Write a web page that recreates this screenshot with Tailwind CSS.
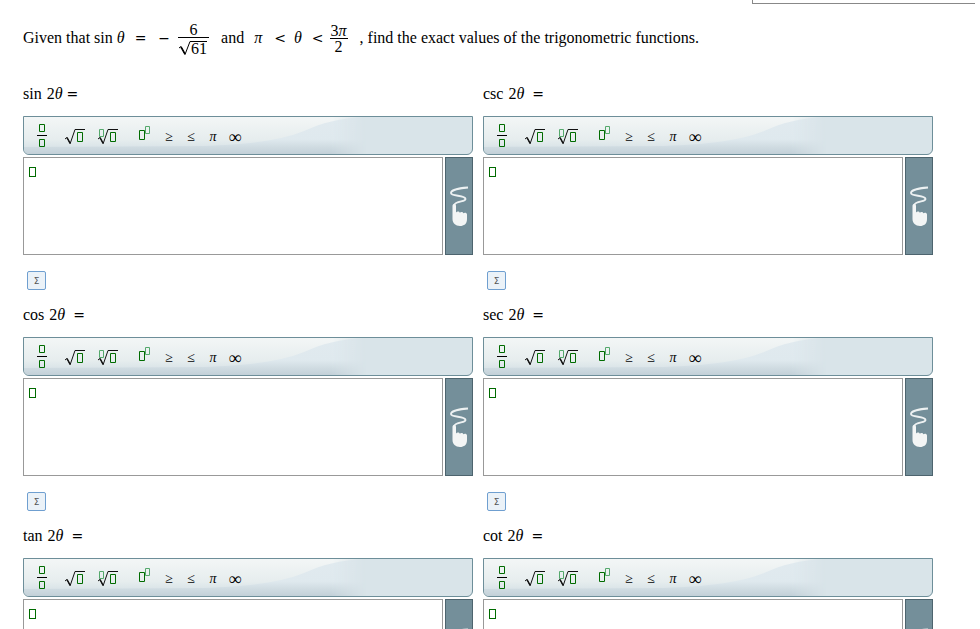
<!DOCTYPE html>
<html lang="en">
  <head>
    <meta charset="UTF-8" />
    <meta name="viewport" content="width=device-width, initial-scale=1.0" />
    <title>Double angle values</title>
    <script src="https://cdn.jsdelivr.net/npm/@tailwindcss/browser@4"></script>
  </head>
  <body class="bg-white text-black font-['Liberation_Serif',serif] text-base overflow-x-hidden">
    <!-- Shared drawings -->
    <svg class="absolute w-0 h-0" aria-hidden="true">
      <defs>
        <linearGradient id="sheen" x1="0" y1="0" x2="0" y2="1">
          <stop offset="0" stop-color="#f3f6f6" />
          <stop offset="0.75" stop-color="#e6edee" />
          <stop offset="1" stop-color="#dae4e8" />
        </linearGradient>
        <linearGradient id="base" x1="0" y1="0" x2="0" y2="1">
          <stop offset="0" stop-color="#e1eaef" />
          <stop offset="0.6" stop-color="#dfe9ee" />
          <stop offset="0.82" stop-color="#cfdbe1" />
          <stop offset="1" stop-color="#c3d0d8" />
        </linearGradient>
        <linearGradient id="fade" x1="0" y1="0" x2="1" y2="0">
          <stop offset="0" stop-color="#fff" />
          <stop offset="0.9" stop-color="#fff" />
          <stop offset="1" stop-color="#000" />
        </linearGradient>
        <mask id="fadeMask"><rect width="342" height="37" fill="url(#fade)" /></mask>
      </defs>
      <symbol id="glow" viewBox="0 0 342 37">
        <g mask="url(#fadeMask)">
          <rect width="342" height="37" fill="url(#base)" />
          <path d="M0 0H342C315 1 298 6 280 14C255 24 225 27 180 29L0 30Z" fill="url(#sheen)" />
        </g>
      </symbol>
      <symbol id="frac" viewBox="0 0 33 37">
        <path d="M13.5 7.5h5v7h-5zM13.5 22.5h5v7h-5z" fill="none" stroke="#006b00" />
        <path d="M11 18.5h10" stroke="#000" />
      </symbol>
      <symbol id="root" viewBox="0 0 33 37">
        <path d="M6 22l2-1.5 3.2 6L16 12.5h10" fill="none" stroke="#111" />
        <path d="M8 20.5l3.2 6" stroke="#111" stroke-width="1.5" />
        <path d="M18.5 15.5h5v9h-5z" fill="none" stroke="#006b00" />
      </symbol>
      <symbol id="nroot" viewBox="0 0 33 37">
        <path d="M6 22l2-1.5 3.2 6L16 12.5h10" fill="none" stroke="#111" />
        <path d="M8 20.5l3.2 6" stroke="#111" stroke-width="1.5" />
        <path d="M7.5 12.5h4v7h-4z" fill="none" stroke="#55a96c" />
        <path d="M18.5 15.5h5v9h-5z" fill="none" stroke="#006b00" />
      </symbol>
      <symbol id="power" viewBox="0 0 33 37">
        <path d="M20.5 9.5h4v7h-4z" fill="none" stroke="#55a96c" />
        <path d="M14.5 13.5h5v9h-5z" fill="none" stroke="#006b00" />
      </symbol>
      <symbol id="hand" viewBox="0 0 26 96">
        <path d="M22 29.5C14 30 5 32 5 35C5 38.500 19.500 37 19.500 41C19.500 44 10 42.500 8 47" fill="none" stroke="#edf1f2" stroke-width="1.9" />
        <path d="M6.5 48C6.5 45.4 10 45.4 10 48V54.5C11 53 13.5 53.3 13.8 54.8C14.8 53.6 17 53.8 17.3 55.2C18.5 54.2 21 54.5 21 56.5V61C21 66 18 68 14 68C9.5 68 6.5 65 6.5 61Z" fill="#f3f5f5" />
      </symbol>
    </svg>

    <div class="h-1 w-[223px] ml-auto mr-[5px] border-l border-b border-[#888]"></div>

    <main class="pl-[23px] pr-[47px]">
      <p class="flex items-center mt-[15px] mb-7 whitespace-nowrap">
        <span>Given that sin <i>θ</i></span>
        <span class="ml-[10px] text-sm font-['DejaVu_Sans',sans-serif]">=</span>
        <span class="ml-3 text-sm font-['DejaVu_Sans',sans-serif]">−</span>
        <span class="ml-2 flex flex-col items-center">
          <span class="pt-1 leading-[13px]">6</span>
          <span class="flex border-t border-black pt-px mt-px">
            <svg class="w-[13px] h-[16px]" viewBox="0 0 13 16" fill="none" stroke="#000" aria-hidden="true">
              <path d="M1 9l2-1.5 4 8L12 2.5h1" />
              <path d="M3 8l4 7" stroke-width="1.6" />
            </svg>
            <span class="mt-[2px] mr-[2px] border-t border-black leading-[14px]">61</span>
          </span>
        </span>
        <span class="ml-3">and</span>
        <i class="ml-[10px]">π</i>
        <span class="ml-3 text-sm font-['DejaVu_Sans',sans-serif]">&lt;</span>
        <i class="ml-2">θ</i>
        <span class="ml-[10px] text-sm font-['DejaVu_Sans',sans-serif]">&lt;</span>
        <span class="ml-[6px] flex flex-col items-center">
          <span class="px-px pt-1 leading-[13px]">3<i>π</i></span>
          <span class="self-stretch border-t border-black mt-px text-center leading-4">2</span>
        </span>
        <span class="ml-3">, find the exact values of the trigonometric functions.</span>
      </p>

      <div id="answers" class="grid grid-cols-2 gap-x-[10px] gap-y-[15px]"></div>
    </main>

    <script>
      const fields = [
        ["sin", "ml-1"],
        ["csc", "ml-2"],
        ["cos", "ml-2"],
        ["sec", "ml-2"],
        ["tan", "ml-2"],
        ["cot", "ml-2"],
      ];

      const icons = [
        ["frac", "Fraction"],
        ["root", "Square root"],
        ["nroot", "Nth root"],
        ["power", "Exponent"],
      ];

      const symbols = [
        ["≥", "text-sm"],
        ["≤", "text-sm"],
        ["π", "text-sm italic"],
        ["∞", "text-lg"],
      ];

      const iconButtons = icons
        .map(
          ([id, name]) => `
        <button type="button" aria-label="${name}" class="w-[33px]">
          <svg class="w-[33px] h-[37px]"><use href="#${id}" /></svg>
        </button>`
        )
        .join("");

      const symbolButtons = symbols
        .map(([s, size]) => `<button type="button" class="w-[22px] pt-[2px] text-black ${size}">${s}</button>`)
        .join("");

      document.getElementById("answers").innerHTML = fields
        .map(
          ([fn, gap]) => `
        <section>
          <label for="${fn}" class="flex items-center leading-5 mb-3">
            <span>${fn}</span>
            <span class="ml-[5px]">2<i>θ</i></span>
            <span class="${gap} text-sm leading-5 font-['DejaVu_Sans',sans-serif]">=</span>
          </label>
          <div class="relative flex h-[39px] pl-[2px] border border-[#6d8e99] rounded-b-md bg-[#d9e4e9] overflow-hidden">
            <svg class="absolute left-0 top-0 w-[342px] h-[37px]" aria-hidden="true"><use href="#glow" /></svg>
            <div class="relative flex">${iconButtons}${symbolButtons}</div>
          </div>
          <div class="flex gap-[2px] mt-[2px] h-[98px]">
            <div class="relative flex-1">
              <textarea id="${fn}" class="block w-full h-full pl-4 pt-1 border border-[#999] resize-none outline-none"></textarea>
              <span class="absolute left-[6px] top-[10px] w-[7px] h-[10px] border border-[#006b00] pointer-events-none"></span>
            </div>
            <button type="button" aria-label="Handwriting" class="w-7 border border-[#4d646e] bg-[#748f9a]">
              <svg class="w-[26px] h-[96px]"><use href="#hand" /></svg>
            </button>
          </div>
          <button type="button" class="block mt-4 ml-1 w-[19px] h-[19px] border border-[#6f9fd0] rounded-[2px] bg-[#ebf2f8] text-[9px] leading-4 text-[#555] font-['DejaVu_Sans',sans-serif]">Σ</button>
        </section>`
        )
        .join("");
    </script>
  </body>
</html>
